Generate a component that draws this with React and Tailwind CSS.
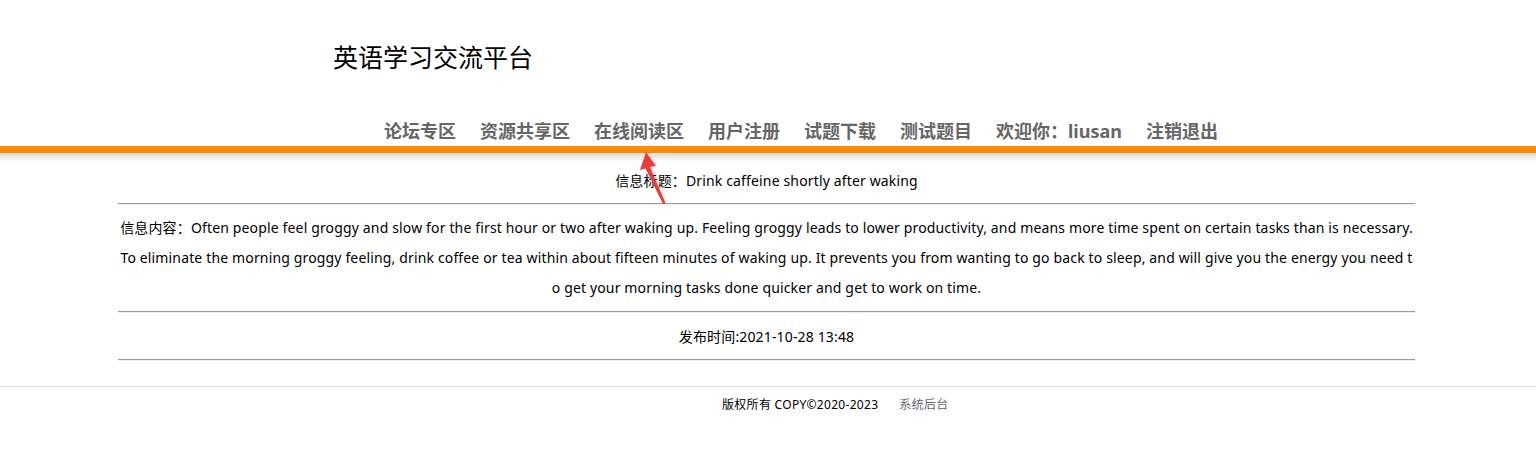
import React from 'react';

const navItems = ['论坛专区', '资源共享区', '在线阅读区', '用户注册', '试题下载', '测试题目', '欢迎你：liusan', '注销退出'];

const contentLines = [
    '信息内容：Often people feel groggy and slow for the first hour or two after waking up. Feeling groggy leads to lower productivity, and means more time spent on certain tasks than is necessary.',
    'To eliminate the morning groggy feeling, drink coffee or tea within about fifteen minutes of waking up. It prevents you from wanting to go back to sleep, and will give you the energy you need t',
    'o get your morning tasks done quicker and get to work on time.',
];

function Rule() {
    return <div className="border-t border-b border-t-[#999] border-b-[#eee]"></div>;
}

export default function App() {
    return (
        <div className="relative min-h-[463px] bg-white text-black font-['Noto_Sans','Noto_Sans_CJK_SC',sans-serif]">
            {/* Header */}
            <div className="pt-[42px] pl-[333px] text-[25px] leading-[30px] text-black">英语学习交流平台</div>
            <nav className="mt-[44px] pl-[384px] flex gap-[24px] text-[18px] leading-[30px] font-bold text-[#666]">
                {navItems.map((item) => (
                    <a key={item} href="#" className="whitespace-nowrap">{item}</a>
                ))}
            </nav>
            <div className="h-[7px] bg-[#ff8c00]"></div>
            <div className="h-[9px] bg-gradient-to-b from-[#dcdcdc] to-white"></div>

            {/* Article */}
            <div className="ml-[118px] w-[1297px] text-[14px] tracking-[0.15px] text-center">
                <div className="mt-[7px] leading-[24px]">信息标题：Drink caffeine shortly after waking</div>
                <div className="mt-[10px]"><Rule /></div>
                <div className="mt-[8px] leading-[30px]">
                    {contentLines.map((line, i) => (
                        <div key={i} className="whitespace-nowrap">{line}</div>
                    ))}
                </div>
                <div className="mt-[8px]"><Rule /></div>
                <div className="mt-[12px] leading-[24px]">发布时间:2021-10-28 13:48</div>
                <div className="mt-[10px]"><Rule /></div>
            </div>

            {/* Footer */}
            <div className="mt-[25px] border-t border-[#ddd] pt-[9px] pl-[722px] flex text-[12px] tracking-[0.3px] leading-[18px]">
                <span>版权所有 COPY©2020-2023</span>
                <a href="#" className="ml-[21px] text-[#666]">系统后台</a>
            </div>

            {/* annotation arrow */}
            <svg className="absolute left-[636px] top-[150px]" width="40" height="56" viewBox="0 0 40 56">
                <polygon points="10,2 4,20 9.5,18.5 27,54 29.5,53 14,17 20,16" fill="#f03a3a" />
            </svg>
        </div>
    );
}
